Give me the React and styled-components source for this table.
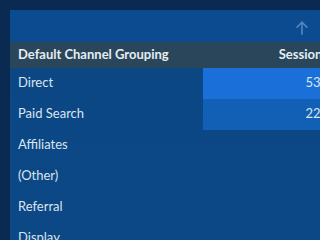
import React from "react";
import styled, { createGlobalStyle } from "styled-components";

const Global = createGlobalStyle`
  html, body {
    margin: 0;
    padding: 0;
    width: 320px;
    height: 240px;
    overflow: hidden;
    background: #0a2a52;
  }
  body {
    font-family: Lato, "Noto Sans", sans-serif;
  }
`;

const Page = styled.div`
  height: 240px;
  overflow: hidden;
  padding: 10px 0 0 10px;
  box-sizing: border-box;
`;

const Panel = styled.div`
  width: 326px;
  min-height: 260px;
  background: linear-gradient(180deg, #0c4784 0%, #0c4886 100%);
  display: flex;
  flex-direction: column;
`;

const TopBar = styled.div`
  flex-shrink: 0;
  height: 32px;
  box-sizing: border-box;
  background: #0d4b90;
  display: flex;
  align-items: center;
  justify-content: flex-end;
  padding: 4px 28px 0 0;
`;

const SortButton = styled.button`
  border: 0;
  background: none;
  padding: 0;
  display: flex;
  color: #5288c6;
`;

const Grid = styled.div`
  display: grid;
  grid-template-columns: 193px 1fr;
`;

const HeadCell = styled.div`
  height: 26px;
  box-sizing: border-box;
  background: #29465a;
  color: #e6edf2;
  font-weight: 700;
  font-size: 13px;
  display: flex;
  align-items: center;
  padding: 0 8px 2px;
  justify-content: ${(p) => (p.$num ? "flex-end" : "flex-start")};
`;

const LabelCell = styled.div`
  height: 31px;
  box-sizing: border-box;
  color: #dbe5ef;
  font-size: 13px;
  display: flex;
  align-items: center;
  padding: 0 8px 3px;
`;

const ValueCell = styled(LabelCell)`
  justify-content: flex-end;
  background: ${(p) => p.$bg || "transparent"};
`;

const rows = [
  { name: "Direct", value: "538", bg: "#1a70d8" },
  { name: "Paid Search", value: "226", bg: "#1260b6" },
  { name: "Affiliates", value: "" },
  { name: "(Other)", value: "" },
  { name: "Referral", value: "" },
  { name: "Display", value: "" },
];

export default function App() {
  return (
    <>
      <Global />
      <Page>
        <Panel>
          <TopBar>
            <SortButton aria-label="Sort">
              <svg width="12" height="14" viewBox="0 0 12 14" fill="none" stroke="currentColor" strokeWidth="1.6" strokeLinecap="round" strokeLinejoin="round">
                <path d="M6 13.2V1.2" />
                <path d="M1 6.2L6 1.2L11 6.2" />
              </svg>
            </SortButton>
          </TopBar>
          <Grid>
            <HeadCell>Default Channel Grouping</HeadCell>
            <HeadCell $num>Sessions</HeadCell>
            {rows.map((r) => (
              <React.Fragment key={r.name}>
                <LabelCell>{r.name}</LabelCell>
                <ValueCell $bg={r.bg}>{r.value}</ValueCell>
              </React.Fragment>
            ))}
          </Grid>
        </Panel>
      </Page>
    </>
  );
}
